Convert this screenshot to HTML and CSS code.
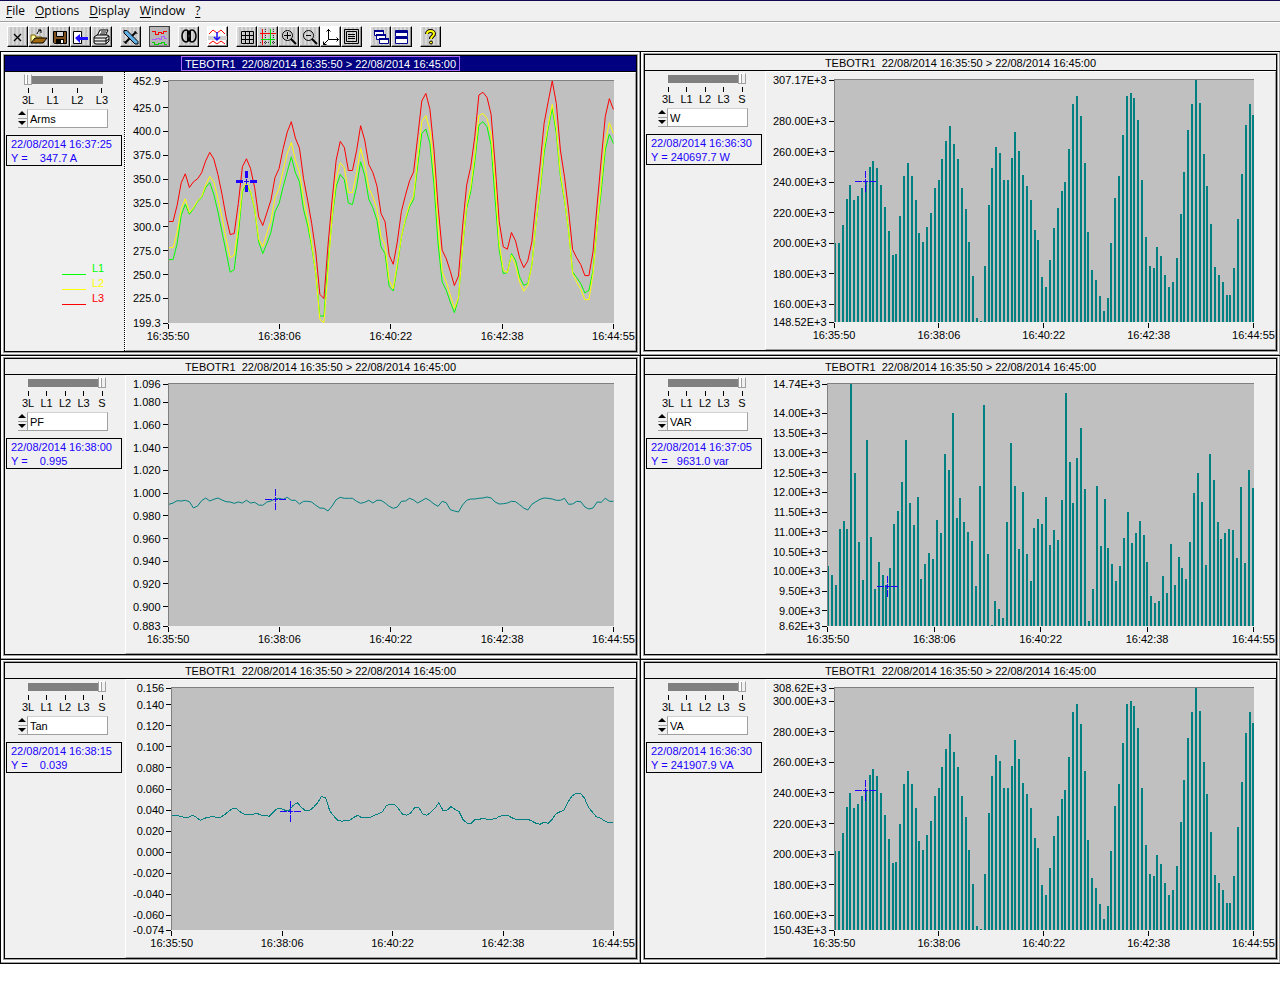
FILE: index.html
```html
<!DOCTYPE html>
<html lang="en">
<head>
    <meta charset="UTF-8">
    <meta name="viewport" content="width=device-width, initial-scale=1.0">
    <title>TEBOTR1</title>
    <link rel="stylesheet" href="styles.css">
</head>

<body>
    <header>
        <nav class="menu">
            <button type="button"><u>F</u>ile</button>
            <button type="button"><u>O</u>ptions</button>
            <button type="button"><u>D</u>isplay</button>
            <button type="button"><u>W</u>indow</button>
            <button type="button"><u>?</u></button>
        </nav>
        <div class="toolbar">
            <div class="group">
                <button type="button" aria-label="Close">
                    <svg viewBox="0 0 19 19"><path d="M6 7l7 7M13 7l-7 7" stroke="#000" stroke-width="1.3"/></svg>
                </button>
                <button type="button" aria-label="Open">
                    <svg viewBox="0 0 19 19"><path d="M2 16V8h4l1 2h6v3" fill="#ffffa0" stroke="#806000"/><path d="M2 16l4-5h12l-4 5z" fill="#a06810" stroke="#000"/><path d="M8 7c1-3 2-3 4-4M9 3h3v3" fill="none" stroke="#000"/></svg>
                </button>
                <button type="button" aria-label="Save">
                    <svg viewBox="0 0 19 19"><path d="M3.500 4.500h13v12h-12l-1-1z" fill="#805020" stroke="#000"/><path d="M6.500 4.500h7v5h-7z" fill="#d8d8d8" stroke="#000"/><path d="M6 12h8v5H6z" fill="#000"/><path d="M11 13h2v3h-2z" fill="#fff"/></svg>
                </button>
                <button type="button" aria-label="Export">
                    <svg viewBox="0 0 19 19"><path d="M2.500 4.500h8v12h-8z" fill="#fff" stroke="#000"/><path d="M4 11l5-4v3h8v3H9v3z" fill="#2010ff"/></svg>
                </button>
                <button type="button" aria-label="Print">
                    <svg viewBox="0 0 19 19"><path d="M5 9l3-6h8l-3 6" fill="#fff" stroke="#000"/><path d="M9 5h5M8 7h5" stroke="#000"/><path d="M2 10l3-2h10l2 1v5l-3 3H4l-2-1z" fill="#e8e8e8" stroke="#000"/><path d="M2 11h12l3-2M2 14h12l3-2M14 11v6" fill="none" stroke="#000"/></svg>
                </button>
            </div>
            <div class="group">
                <button type="button" aria-label="Tools">
                    <svg viewBox="0 0 19 19"><path d="M4 16L15 5" stroke="#000" stroke-width="2"/><path d="M2.500 14l3 3M13.500 4l3 3" stroke="#000"/><path d="M3 3.500h3l11 11v2.500h-3L3 6z" fill="#60b0e8" stroke="#000"/></svg>
                </button>
            </div>
            <div class="group">
                <button type="button" class="dark" aria-label="Curves">
                    <svg viewBox="0 0 19 19" shape-rendering="crispEdges"><path d="M2 4.500h3v3h3v-2h3v1h2v-2h4" stroke="#f00"/><path d="M2 12.500h4v-1h3v1h2v-3h3v2h3" stroke="#b060ff"/><path d="M2 15.500h2v2h4v-1h3v-1h3v2h3" stroke="#00d000"/></svg>
                </button>
            </div>
            <div class="group">
                <button type="button" aria-label="Phases">
                    <svg viewBox="0 0 19 19"><g fill="none" stroke="#000" stroke-width="1.500"><ellipse cx="7" cy="9" rx="4" ry="6"/><ellipse cx="13" cy="9" rx="4" ry="6"/><path d="M8.500 4v10M11.500 4v10" stroke-width="1"/></g></svg>
                </button>
            </div>
            <div class="group">
                <button type="button" class="light" aria-label="Minimum">
                    <svg viewBox="0 0 19 19"><path d="M0 9h19v4H0z" fill="#d0d0d0"/><path d="M1 7l4-4 4 3 4-3 4 4M1 17l4-3 4 3 4-3 4 3" fill="none" stroke="#f00"/><path d="M9 5v8M6 10l3 3 3-3" fill="none" stroke="#2010ff" stroke-width="1.500"/></svg>
                </button>
            </div>
            <div class="group">
                <button type="button" aria-label="Grid">
                    <svg viewBox="0 0 19 19"><path d="M4.500 4.500h12v12h-12zM8.500 4v13M12.500 4v13M4 8.500h13M4 12.500h13" stroke="#000"/></svg>
                </button>
                <button type="button" aria-label="Colour grid">
                    <svg viewBox="0 0 19 19"><path d="M2 15.500h16M15.500 2v16M7.500 2v16" stroke="#333" stroke-dasharray="1 1"/><path d="M2 6.500h16M4.500 2v16" stroke="#f00"/><path d="M3 12.500h14M12.500 2v16" stroke="#00e000"/></svg>
                </button>
                <button type="button" aria-label="Zoom in">
                    <svg viewBox="0 0 19 19"><circle cx="8.500" cy="8.500" r="5" stroke="#000"/><path d="M5 8.500h7M8.500 5v7" stroke="#000"/><path d="M12 12l5 5" stroke="#000" stroke-width="2"/></svg>
                </button>
                <button type="button" aria-label="Zoom out">
                    <svg viewBox="0 0 19 19"><circle cx="8.500" cy="8.500" r="5" stroke="#000"/><path d="M6 8.500h5" stroke="#000"/><path d="M12 12l5 5" stroke="#000" stroke-width="2"/></svg>
                </button>
                <button type="button" class="light" aria-label="Axes">
                    <svg viewBox="0 0 19 19"><path d="M7.500 2v10.500h10M7.500 12.500l-5 5M5.500 4.500l2-2 2 2M15.500 10.500l2 2-2 2M2.500 14.500v3h3" stroke="#000"/></svg>
                </button>
                <button type="button" aria-label="List">
                    <svg viewBox="0 0 19 19"><path d="M2.500 2.500h14v14h-14zM4.500 4.500h10v10h-10z" stroke="#000"/><path d="M6 7.500h7M6 9.500h7M6 11.500h7" stroke="#000"/></svg>
                </button>
            </div>
            <div class="group">
                <button type="button" aria-label="Cascade">
                    <svg viewBox="0 0 19 19"><g fill="#fff" stroke="#000090"><path d="M3.500 3.500h9v5h-9zM5.500 7.500h9v5h-9zM8.500 11.500h9v5h-9z"/><path d="M3 4h10M5 8h10M8 12h10" stroke-width="2"/></g></svg>
                </button>
                <button type="button" aria-label="Tile">
                    <svg viewBox="0 0 19 19"><g fill="#fff" stroke="#000090"><path d="M3.500 3.500h12v6h-12zM3.500 10.500h12v6h-12z"/><path d="M3 5h13M3 11h13" stroke-width="2"/></g></svg>
                </button>
            </div>
            <div class="group">
                <button type="button" aria-label="Help">
                    <svg viewBox="0 0 19 19"><path d="M6 7c0-4 7-4 7 0 0 2-3 2-3 5" stroke="#000" stroke-width="4"/><path d="M6 7c0-4 7-4 7 0 0 2-3 2-3 5" stroke="#ffff00" stroke-width="2"/><circle cx="10" cy="15.500" r="1.500" fill="#ffff00" stroke="#000"/></svg>
                </button>
            </div>
        </div>
    </header>

    <main id="panels"></main>

    <script src="app.js"></script>
</body>
</html>
```

FILE: styles.css
```css
* {
    box-sizing: border-box;
}

body {
    margin: 0;
    background: #fff;
    color: #000;
    font-family: "Liberation Sans", Arial, sans-serif;
    font-size: 11px;
    line-height: 14px;
}

button, select, input {
    font: inherit;
    color: inherit;
    margin: 0;
}

header {
    background: #f0f0f0;
    border-top: 1px solid #100850;
}

/* Menu bar */
.menu {
    display: flex;
    height: 21px;
    padding-left: 6px;
    gap: 10px;
    border-bottom: 1px solid #a0a0a0;
}

.menu button {
    padding: 0;
    border: none;
    background: none;
    font-family: "Open Sans", sans-serif;
    font-size: 12px;
    line-height: 18px;
}

.menu u {
    text-underline-offset: 2px;
}

/* Toolbar */
.toolbar {
    display: flex;
    gap: 8px;
    height: 29px;
    padding: 3px 7px 0;
    border-top: 1px solid #fff;
}

.group {
    display: flex;
}

.toolbar button {
    width: 21px;
    height: 21px;
    padding: 0;
    border: 1px solid #000;
    border-top-color: #fff;
    border-left-color: #fff;
    background: repeating-linear-gradient(90deg, #d8d8d8 0 2px, #c4c4c4 2px 4px);
    box-shadow: inset -1px -1px #909090;
}

.toolbar button.dark {
    background: #b8b8b8;
    border-color: #404040;
}

.toolbar button.light {
    background: #fff;
}

.toolbar svg {
    display: block;
    width: 19px;
    height: 19px;
    fill: none;
}

/* Graph windows */
main {
    display: grid;
    grid-template-columns: 1fr 1fr;
    border-bottom: 1px solid #000;
}

.panel {
    height: 304px;
    padding: 2px 3px 4px;
    border-top: 1px solid #000;
    border-left: 1px solid #000;
    background: #fff;
    box-shadow: inset -1px -1px #a0a0a0;
}

.panel.active {
    padding-top: 3px;
    padding-bottom: 3px;
}

.frame {
    display: flex;
    flex-direction: column;
    height: 297px;
    border: 1px solid #000;
    background: #f0f0f0;
    box-shadow: 0 0 0 1px #a0a0a0;
}

.panel h2 {
    display: flex;
    justify-content: center;
    height: 16px;
    margin: 0;
    border-bottom: 1px solid #000;
    font-size: 11px;
    font-weight: normal;
    white-space: pre;
}

.panel h2 span {
    padding: 1px 4px 0;
}

.active h2 {
    background: #000080;
    color: #fff;
}

.active h2 span {
    padding: 0 3px;
    border: 1px solid #a868ff;
}

.content {
    display: flex;
    flex: 1;
}

/* Left column of a window */
.side {
    width: 120px;
    border-right: 1px solid #f0f0f0;
}

.active .side {
    border-right: 1px dotted #000;
}

.slider {
    display: block;
    appearance: none;
    width: 82px;
    height: 11px;
    margin: 2px 0 0 19px;
    background: none;
}

.slider::-webkit-slider-runnable-track {
    height: 11px;
    background: linear-gradient(#808080, #808080) center / 75px 8px no-repeat;
}

.slider::-webkit-slider-thumb {
    appearance: none;
    width: 8px;
    height: 11px;
    border: 1px solid #a0a0a0;
    border-top-color: #fff;
    background: linear-gradient(90deg, #fff 0 2px, #a0a0a0 2px 3px, #f0f0f0 3px);
}

.scale {
    display: flex;
    justify-content: space-between;
    width: 88px;
    margin: 3px 0 0 16px;
}

.scale span {
    width: 14px;
    text-align: center;
}

.scale span::before {
    content: "";
    display: block;
    width: 1px;
    height: 5px;
    margin: 0 auto;
    background: #000;
}

.ring {
    display: flex;
    width: 90px;
    height: 19px;
    margin: 2px 0 0 13px;
}

.spin {
    display: flex;
    flex-direction: column;
    width: 9px;
}

.spin button {
    flex: 1;
    display: flex;
    align-items: center;
    padding: 0;
    border: none;
    border-bottom: 1px solid #a0a0a0;
    background: none;
}

.spin svg {
    width: 8px;
    height: 4px;
}

.ring select {
    flex: 1;
    appearance: none;
    padding: 0 2px;
    border: 1px solid #a0a0a0;
    border-top-color: #d0d0d0;
    border-radius: 0;
    background: #fff;
}

.readout {
    display: block;
    width: 116px;
    margin: 7px 0 0 1px;
    padding: 1px 0 0 4px;
    border: 1px solid #000;
    color: #2000ff;
    white-space: pre;
}

.legend {
    margin: 95px 0 0 57px;
    padding: 0;
    list-style: none;
    line-height: 15px;
}

.legend li {
    display: flex;
    gap: 6px;
}

.legend li::before {
    content: "";
    width: 24px;
    height: 13px;
    border-bottom: 1px solid currentColor;
}

.l1 { color: #00ff00; stroke: #00ff00; }
.l2 { color: #ffff00; stroke: #ffff00; }
.l3 { color: #ff0000; stroke: #ff0000; }
.sum { stroke: #008080; }

/* Chart with its axes */
.chart {
    flex: 1;
    display: grid;
    grid-template-columns: auto 1fr;
    grid-template-rows: 243px auto;
    padding: 7px 21px 0 7px;
    border: 1px solid #a0a0a0;
    border-top-color: #fff;
    border-left-color: #fff;
}

.y-axis {
    display: grid;
    height: 242px;
    margin-top: 1px;
}

.y-axis span {
    grid-area: 1 / 1;
    position: relative;
    display: flex;
    justify-content: flex-end;
    align-items: center;
    align-self: start;
    margin-top: -7px;
}

.y-axis span::after {
    content: "";
    width: 5px;
    height: 1px;
    margin-left: 2px;
    background: #000;
}

.plot {
    position: relative;
    border-top: 1px solid #808080;
    border-left: 1px solid #808080;
    background: #c0c0c0;
}

.series {
    display: block;
    width: 100%;
    height: 242px;
}

.series path {
    fill: none;
    vector-effect: non-scaling-stroke;
    shape-rendering: crispEdges;
}

.cursor {
    position: absolute;
    width: 21px;
    height: 21px;
    margin: -10px 0 0 -10px;
    fill: #2000ff;
    shape-rendering: crispEdges;
}

.x-axis {
    grid-column: 2;
    display: flex;
    justify-content: space-between;
    margin-top: 1px;
}

.x-axis span {
    display: flex;
    flex-direction: column;
    align-items: center;
    width: 1px;
}

.x-axis span::before {
    content: "";
    width: 1px;
    height: 5px;
    background: #000;
}
```

FILE: app.js
```js
const TITLE = 'TEBOTR1  22/08/2014 16:35:50 > 22/08/2014 16:45:00';
const TIMES = ['16:35:50', '16:38:06', '16:40:22', '16:42:38', '16:44:55'];

// one sample every 5 seconds, 110 samples per series
const LAST = 109;

// bar heights, full scale is 242
const power = [
    79, 79, 97, 123, 137, 122, 126, 134, 140, 155, 161, 154, 137, 115, 91, 67, 68, 106, 146, 159,
    146, 122, 89, 80, 95, 109, 134, 142, 163, 181, 196, 178, 163, 134, 113, 80, 46, 4, 1, 56,
    117, 154, 175, 169, 142, 142, 164, 190, 171, 147, 136, 122, 92, 82, 45, 35, 62, 94, 114, 131,
    140, 173, 218, 226, 206, 159, 90, 52, 42, 26, 11, 24, 79, 124, 146, 187, 226, 229, 224, 202,
    142, 85, 56, 54, 75, 66, 47, 35, 40, 64, 108, 150, 192, 218, 242, 219, 168, 136, 98, 55,
    47, 40, 27, 27, 54, 103, 148, 197, 218, 207
];
const reactive = [
    60, 51, 41, 97, 105, 97, 242, 153, 84, 46, 186, 89, 37, 64, 51, 41, 58, 102, 115, 144,
    186, 123, 101, 129, 47, 62, 73, 67, 106, 93, 172, 156, 213, 108, 128, 104, 94, 85, 40, 140,
    221, 72, 1, 25, 17, 8, 104, 183, 140, 77, 134, 72, 45, 98, 107, 102, 129, 81, 96, 86,
    126, 233, 164, 123, 168, 198, 137, 5, 37, 140, 80, 127, 78, 62, 45, 60, 88, 114, 83, 93,
    105, 91, 64, 30, 23, 25, 50, 33, 82, 41, 69, 58, 47, 84, 133, 153, 124, 61, 172, 146,
    104, 87, 93, 97, 96, 68, 139, 63, 156, 138
];

// curves, counted downwards from each chart's own "top" to "bottom"
const amps1 = [
    568, 568, 520, 435, 402, 432, 416, 395, 382, 352, 337, 373, 425, 485, 545, 606, 598, 495, 365, 343,
    366, 417, 515, 550, 520, 487, 425, 400, 350, 305, 260, 308, 335, 418, 465, 530, 610, 737, 738, 580,
    445, 350, 313, 328, 399, 403, 350, 275, 315, 387, 413, 450, 530, 550, 648, 662, 590, 500, 450, 410,
    388, 285, 190, 177, 220, 345, 520, 635, 660, 695, 727, 685, 530, 415, 365, 275, 165, 155, 170, 225,
    390, 540, 610, 607, 550, 570, 620, 645, 640, 585, 460, 365, 250, 175, 115, 190, 320, 390, 480, 605,
    622, 640, 668, 660, 600, 470, 365, 240, 192, 220
];
const amps2 = [
    532, 532, 487, 415, 386, 427, 413, 392, 380, 345, 319, 335, 385, 440, 505, 562, 555, 470, 355, 337,
    363, 415, 507, 530, 490, 452, 382, 355, 300, 250, 217, 270, 306, 385, 445, 520, 610, 747, 757, 600,
    440, 325, 278, 293, 367, 367, 310, 235, 280, 353, 380, 415, 500, 525, 630, 655, 580, 500, 445, 402,
    378, 265, 155, 137, 180, 300, 470, 605, 635, 675, 715, 683, 530, 405, 350, 255, 137, 130, 145, 195,
    340, 520, 600, 607, 555, 585, 635, 663, 645, 585, 460, 355, 230, 165, 103, 175, 310, 385, 480, 610,
    635, 657, 688, 688, 610, 470, 340, 215, 158, 190
];
const amps3 = [
    454, 454, 405, 338, 311, 352, 335, 326, 308, 272, 247, 267, 313, 372, 440, 493, 490, 400, 290, 266,
    295, 352, 440, 466, 428, 390, 322, 295, 235, 186, 155, 204, 234, 325, 390, 460, 545, 672, 685, 525,
    390, 270, 214, 232, 301, 301, 242, 167, 210, 283, 307, 347, 430, 455, 555, 582, 515, 424, 375, 332,
    305, 200, 93, 70, 118, 240, 410, 540, 565, 603, 646, 617, 470, 345, 290, 200, 75, 67, 82, 133,
    285, 455, 530, 537, 487, 512, 563, 592, 572, 515, 395, 285, 160, 95, 33, 100, 240, 320, 420, 538,
    563, 583, 616, 616, 545, 405, 270, 140, 86, 118
];
const factor = [
    73, 69, 62, 63, 61, 65, 84, 78, 62, 54, 63, 58, 54, 60, 65, 66, 70, 66, 69, 61,
    69, 67, 75, 76, 66, 63, 57, 55, 58, 52, 61, 61, 72, 64, 64, 66, 76, 84, 85, 93,
    78, 59, 52, 55, 55, 55, 64, 70, 67, 61, 69, 61, 61, 69, 79, 85, 81, 64, 63, 55,
    60, 69, 62, 55, 62, 72, 79, 64, 68, 89, 93, 96, 75, 61, 57, 57, 55, 54, 51, 54,
    66, 72, 71, 69, 64, 65, 74, 84, 90, 73, 65, 58, 54, 55, 57, 61, 61, 55, 73, 72,
    64, 65, 81, 87, 84, 66, 67, 55, 64, 64
];
const tangent = [
    106, 106, 109, 112, 112, 106, 112, 121, 115, 112, 109, 112, 112, 104, 94, 85, 86, 97, 103, 103,
    103, 100, 105, 105, 109, 97, 86, 86, 91, 91, 76, 68, 82, 92, 92, 82, 68, 49, 54, 92,
    108, 121, 124, 121, 121, 112, 106, 114, 112, 112, 106, 102, 96, 77, 73, 73, 86, 102, 106, 99,
    83, 82, 102, 106, 97, 85, 68, 91, 91, 80, 88, 95, 119, 130, 130, 118, 118, 115, 118, 118,
    116, 109, 106, 106, 113, 118, 118, 118, 118, 123, 130, 133, 127, 130, 118, 101, 95, 90, 65, 47,
    40, 40, 54, 82, 97, 111, 115, 123, 129, 127
];

const charts = [
    {
        name: 'Arms', active: true, steps: ['3L', 'L1', 'L2', 'L3'], step: 0,
        time: '22/08/2014 16:37:25', text: 'Y =    347.7 A', at: 19, value: 347.7,
        labels: ['452.9', '425.0', '400.0', '375.0', '350.0', '325.0', '300.0', '275.0', '250.0', '225.0', '199.3'],
        top: 33, bottom: 758,
        lines: [['l3', amps3], ['l1', amps1], ['l2', amps2]]
    },
    {
        name: 'W', time: '22/08/2014 16:36:30', text: 'Y = 240697.7 W', at: 8, value: 240697.7,
        labels: ['307.17E+3', '280.00E+3', '260.00E+3', '240.00E+3', '220.00E+3', '200.00E+3', '180.00E+3', '160.00E+3', '148.52E+3'],
        bars: power
    },
    {
        name: 'PF', time: '22/08/2014 16:38:00', text: 'Y =    0.995', at: 26, value: 0.995,
        labels: ['1.096', '1.080', '1.060', '1.040', '1.020', '1.000', '0.980', '0.960', '0.940', '0.920', '0.900', '0.883'],
        top: -288, bottom: 438,
        lines: [['sum', factor]]
    },
    {
        name: 'VAR', time: '22/08/2014 16:37:05', text: 'Y =   9631.0 var', at: 15, value: 9631,
        labels: ['14.74E+3', '14.00E+3', '13.50E+3', '13.00E+3', '12.50E+3', '12.00E+3', '11.50E+3', '11.00E+3', '10.50E+3', '10.00E+3', '9.50E+3', '9.00E+3', '8.62E+3'],
        bars: reactive
    },
    {
        name: 'Tan', time: '22/08/2014 16:38:15', text: 'Y =    0.039', at: 29, value: 0.039,
        labels: ['0.156', '0.140', '0.120', '0.100', '0.080', '0.060', '0.040', '0.020', '0.000', '-0.020', '-0.040', '-0.060', '-0.074'],
        top: -276, bottom: 450,
        lines: [['sum', tangent]]
    },
    {
        name: 'VA', time: '22/08/2014 16:36:30', text: 'Y = 241907.9 VA', at: 8, value: 241907.9,
        labels: ['308.62E+3', '300.00E+3', '280.00E+3', '260.00E+3', '240.00E+3', '220.00E+3', '200.00E+3', '180.00E+3', '160.00E+3', '150.43E+3'],
        bars: power
    }
];

// position of a value on the Y axis, in % from the top
function percent(chart, value) {
    const max = Number(chart.labels[0]);
    const min = Number(chart.labels[chart.labels.length - 1]);
    return ((max - value) / (max - min) * 100).toFixed(2);
}

function series(chart) {
    if (chart.bars) {
        const d = chart.bars.map((h, i) => `M${i} 242V${242 - h}`).join('');
        return `<path class="sum" stroke-width="2" d="${d}"/>`;
    }
    return chart.lines.map(([cls, data]) => {
        const points = data.map((v, i) => {
            const y = (v - chart.top) / (chart.bottom - chart.top) * 242;
            return `${i} ${y.toFixed(1)}`;
        });
        return `<path class="${cls}" d="M${points.join('L')}"/>`;
    }).join('');
}

function cursor(chart) {
    const thick = chart.active;
    const o = thick ? 9 : 10;
    const w = thick ? 3 : 1;
    return `<svg class="cursor" viewBox="0 0 21 21" style="left:${(chart.at / LAST * 100).toFixed(2)}%;top:${percent(chart, chart.value)}%">
        <path d="M0 ${o}h7v${w}h-7zM14 ${o}h7v${w}h-7zM${o} 0h${w}v7h-${w}zM${o} 14h${w}v7h-${w}zM8 10h5v1h-5zM10 8h1v5h-1z"/>
    </svg>`;
}

function panel(chart, n) {
    const steps = chart.steps || ['3L', 'L1', 'L2', 'L3', 'S'];
    const step = chart.step === undefined ? steps.length - 1 : chart.step;
    const legend = chart.active
        ? '<ul class="legend"><li class="l1">L1</li><li class="l2">L2</li><li class="l3">L3</li></ul>'
        : '';
    return `
    <section class="panel ${chart.active ? 'active' : ''}">
        <div class="frame">
            <h2><span>${TITLE.replace('>', '&gt;')}</span></h2>
            <div class="content">
                <div class="side">
                    <input class="slider" type="range" min="0" max="${steps.length - 1}" value="${step}" aria-label="Phase">
                    <div class="scale">${steps.map(s => `<span>${s}</span>`).join('')}</div>
                    <div class="ring">
                        <div class="spin">
                            <button type="button" aria-label="Previous"><svg viewBox="0 0 8 4"><path d="M0 4l4-4 4 4z"/></svg></button>
                            <button type="button" aria-label="Next"><svg viewBox="0 0 8 4"><path d="M0 0l4 4 4-4z"/></svg></button>
                        </div>
                        <select id="quantity${n}" aria-label="Quantity"><option>${chart.name}</option></select>
                    </div>
                    <output class="readout" for="quantity${n}">${chart.time}\n${chart.text}</output>
                    ${legend}
                </div>
                <div class="chart">
                    <div class="y-axis">${chart.labels.map(l => `<span style="top:${percent(chart, Number(l))}%">${l}</span>`).join('')}</div>
                    <div class="plot">
                        <svg class="series" viewBox="0 0 109.26 242" preserveAspectRatio="none">${series(chart)}</svg>
                        ${cursor(chart)}
                    </div>
                    <div class="x-axis">${TIMES.map(t => `<span>${t}</span>`).join('')}</div>
                </div>
            </div>
        </div>
    </section>`;
}

document.getElementById('panels').innerHTML = charts.map(panel).join('');
```
